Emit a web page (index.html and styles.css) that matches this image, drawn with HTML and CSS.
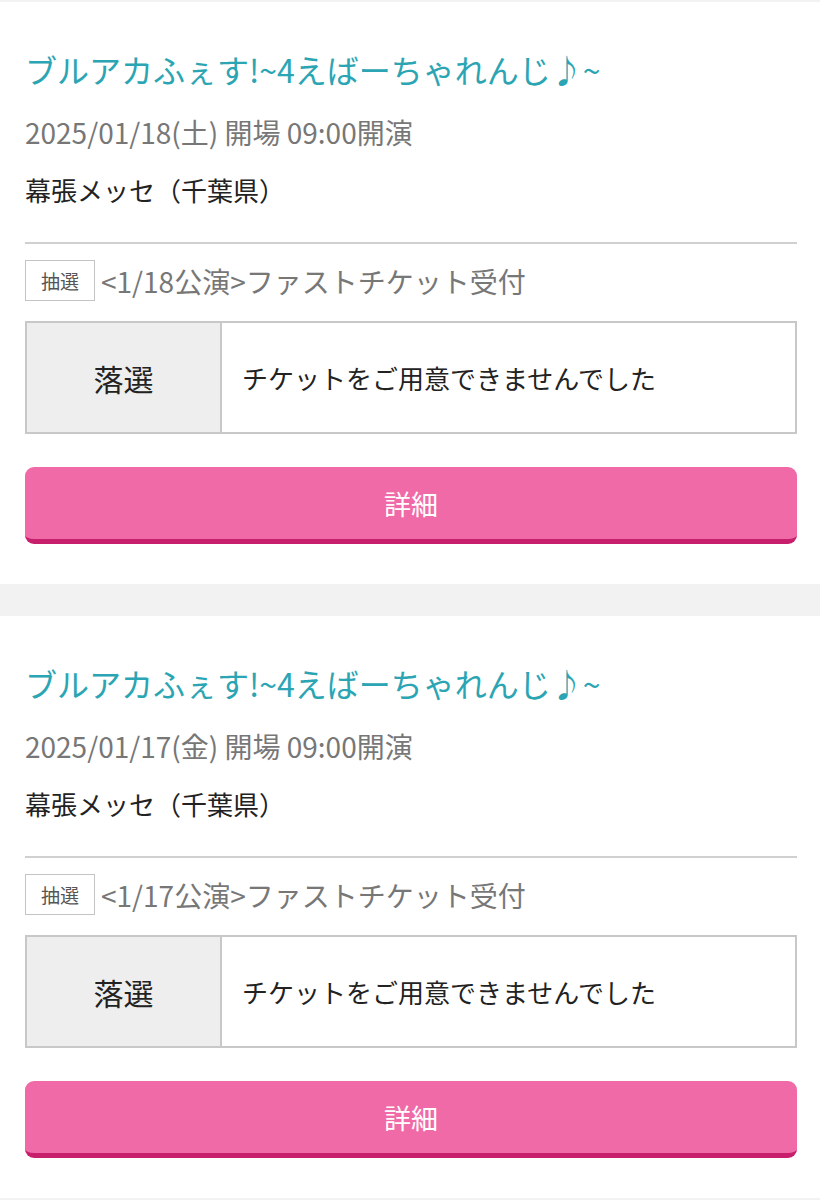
FILE: index.html
```html
<!DOCTYPE html>
<html lang="ja">
<head>
  <meta charset="UTF-8" />
  <meta name="viewport" content="width=device-width, initial-scale=1.0"/>
  <title>申込履歴</title>
  <link rel="stylesheet" href="styles.css">
</head>
<body>
  <main class="history">
    <section class="entry">
      <h2 class="entry-title">ブルアカふぇす!~4えばーちゃれんじ♪~</h2>
      <p class="entry-date">2025/01/18(土) 開場 09:00開演</p>
      <p class="entry-venue">幕張メッセ（千葉県）</p>
      <div class="entry-rule"></div>
      <div class="entry-head">
        <span class="badge">抽選</span>
        <span class="entry-name">&lt;1/18公演&gt;ファストチケット受付</span>
      </div>
      <div class="result">
        <div class="result-label">落選</div>
        <div class="result-text">チケットをご用意できませんでした</div>
      </div>
      <button class="detail-button">詳細</button>
    </section>

    <section class="entry">
      <h2 class="entry-title">ブルアカふぇす!~4えばーちゃれんじ♪~</h2>
      <p class="entry-date">2025/01/17(金) 開場 09:00開演</p>
      <p class="entry-venue">幕張メッセ（千葉県）</p>
      <div class="entry-rule"></div>
      <div class="entry-head">
        <span class="badge">抽選</span>
        <span class="entry-name">&lt;1/17公演&gt;ファストチケット受付</span>
      </div>
      <div class="result">
        <div class="result-label">落選</div>
        <div class="result-text">チケットをご用意できませんでした</div>
      </div>
      <button class="detail-button">詳細</button>
    </section>
  </main>
</body>
</html>
```

FILE: styles.css
```css
body {
  font-family: "Noto Sans CJK JP", "Noto Sans", sans-serif;
  margin: 0;
  padding: 0;
  background: #f2f2f2;
  color: #222;
}
.history {
  padding-top: 2px;
  display: flex;
  flex-direction: column;
  gap: 32px;
}
.entry {
  background: #fff;
  padding: 44px 23px 40px 25px;
}
.entry-title {
  margin: 0;
  font-size: 32px;
  line-height: 46px;
  font-weight: 400;
  color: #2ba5b3;
}
.entry-date {
  margin: 20px 0 0;
  font-size: 28px;
  line-height: 40px;
  color: #777;
}
.entry-venue {
  margin: 20px 0 0;
  font-size: 26px;
  line-height: 36px;
  color: #222;
}
.entry-rule {
  margin-top: 34px;
  border-top: 2px solid #d0d0d0;
}
.entry-head {
  margin-top: 16px;
  display: flex;
  align-items: center;
  gap: 6px;
}
.badge {
  box-sizing: border-box;
  width: 70px;
  height: 41px;
  border: 1px solid #c4c4c4;
  display: flex;
  align-items: center;
  justify-content: center;
  font-size: 19px;
  color: #555;
}
.entry-name {
  font-size: 28px;
  line-height: 40px;
  color: #777;
}
.result {
  margin-top: 20px;
  height: 113px;
  box-sizing: border-box;
  border: 2px solid #c8c8c8;
  display: grid;
  grid-template-columns: 195px 1fr;
}
.result-label {
  background: #eeeeee;
  border-right: 2px solid #c8c8c8;
  display: flex;
  align-items: center;
  justify-content: center;
  font-size: 30px;
  color: #222;
}
.result-text {
  display: flex;
  align-items: center;
  padding-left: 20px;
  font-size: 26px;
  color: #222;
}
.detail-button {
  display: block;
  width: 100%;
  margin-top: 33px;
  height: 77px;
  border: none;
  border-bottom: 5px solid #c71f6c;
  border-radius: 9px;
  background: #f06aa8;
  color: #fff;
  font-family: inherit;
  font-size: 27px;
  cursor: pointer;
}
```
